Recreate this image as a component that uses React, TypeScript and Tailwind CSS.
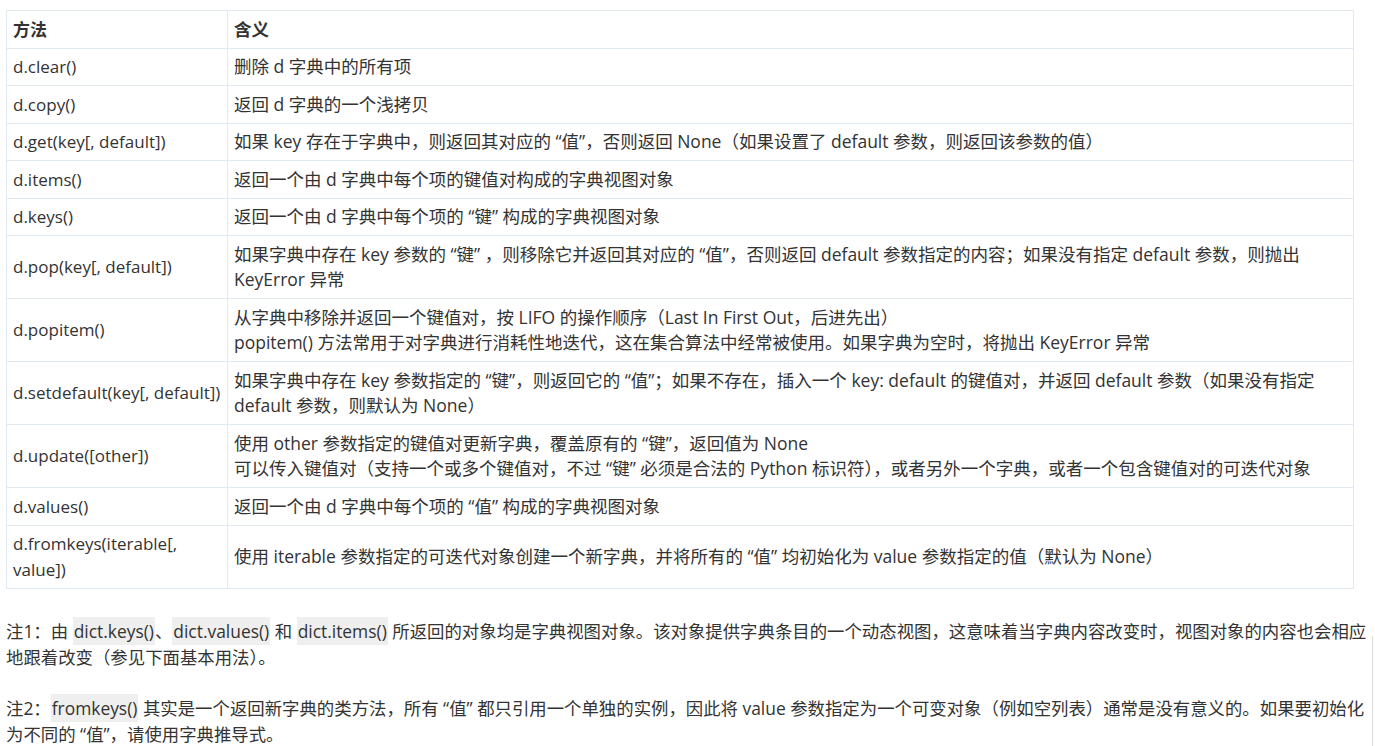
import type { FC, ReactNode } from 'react';

interface IRow {
  method: ReactNode
  meaning: ReactNode
}

const rows: IRow[] = [
  {method: 'd.clear()', meaning: '删除 d 字典中的所有项'},
  {method: 'd.copy()', meaning: '返回 d 字典的一个浅拷贝'},
  {
    method: 'd.get(key[, default])',
    meaning: '如果 key 存在于字典中，则返回其对应的 “值”，否则返回 None（如果设置了 default 参数，则返回该参数的值）'
  },
  {method: 'd.items()', meaning: '返回一个由 d 字典中每个项的键值对构成的字典视图对象'},
  {method: 'd.keys()', meaning: '返回一个由 d 字典中每个项的 “键” 构成的字典视图对象'},
  {
    method: 'd.pop(key[, default])',
    meaning: <>如果字典中存在 key 参数的 “键” ，则移除它并返回其对应的 “值”，否则返回 default 参数指定的内容；如果没有指定 default 参数，则抛出<br/>KeyError 异常</>
  },
  {
    method: 'd.popitem()',
    meaning: <>从字典中移除并返回一个键值对，按 LIFO 的操作顺序（Last In First Out，后进先出）<br/>popitem() 方法常用于对字典进行消耗性地迭代，这在集合算法中经常被使用。如果字典为空时，将抛出 KeyError 异常</>
  },
  {
    method: 'd.setdefault(key[, default])',
    meaning: <>如果字典中存在 key 参数指定的 “键”，则返回它的 “值”；如果不存在，插入一个 key: default 的键值对，并返回 default 参数（如果没有指定<br/>default 参数，则默认为 None）</>
  },
  {
    method: 'd.update([other])',
    meaning: <>使用 other 参数指定的键值对更新字典，覆盖原有的 “键”，返回值为 None<br/>可以传入键值对（支持一个或多个键值对，不过 “键” 必须是合法的 Python 标识符），或者另外一个字典，或者一个包含键值对的可迭代对象</>
  },
  {method: 'd.values()', meaning: '返回一个由 d 字典中每个项的 “值” 构成的字典视图对象'},
  {
    method: <>d.fromkeys(iterable[,<br/>value])</>,
    meaning: '使用 iterable 参数指定的可迭代对象创建一个新字典，并将所有的 “值” 均初始化为 value 参数指定的值（默认为 None）'
  },
]

const Code: FC<{ children: ReactNode }> = ({children}) => (
  <span className="bg-[#efefef] px-[1px] py-[2px]">{children}</span>
)

const cell = 'border border-[#e1e9f2] px-[6px] py-[5.5px] align-middle whitespace-nowrap'

const App: FC = () => {
  return (
    <div
      className="relative min-h-[746px] overflow-hidden bg-white pl-[6px] pt-[10px] text-[17px] leading-[25.5px] text-[#333333]"
      style={{fontFamily: '"Open Sans", "Noto Sans CJK SC", sans-serif'}}
    >
      <table className="w-[1348px] border-collapse">
        <thead>
          <tr>
            <th className={`${cell} w-[221px] text-left font-bold`}>方法</th>
            <th className={`${cell} text-left text-[17.5px] font-bold`}>含义</th>
          </tr>
        </thead>
        <tbody>
          {
            rows.map((row, index) => <tr key={index}>
              <td className={cell}>{row.method}</td>
              <td className={`${cell} text-[17.5px]`}>{row.meaning}</td>
            </tr>)
          }
        </tbody>
      </table>

      <div className="mt-[29px] w-[1366px] whitespace-nowrap text-[17.4px] leading-[26px]">
        <p>
          注1：由 <Code>dict.keys()</Code>、<Code>dict.values()</Code> 和 <Code>dict.items()</Code> 所返回的对象均是字典视图对象。该对象提供字典条目的一个动态视图，这意味着当字典内容改变时，视图对象的内容也会相应
          <br/>地跟着改变（参见下面基本用法）。
        </p>
        <p className="mt-[25px]">
          注2：<Code>fromkeys()</Code> 其实是一个返回新字典的类方法，所有 “值” 都只引用一个单独的实例，因此将 value 参数指定为一个可变对象（例如空列表）通常是没有意义的。如果要初始化
          <br/>为不同的 “值”，请使用字典推导式。
        </p>
      </div>

      {/* thin scroll edge on the right */}
      <div className="absolute right-[2px] top-[636px] bottom-0 w-px bg-[#dddddd]"/>
    </div>
  );
};

export default App
